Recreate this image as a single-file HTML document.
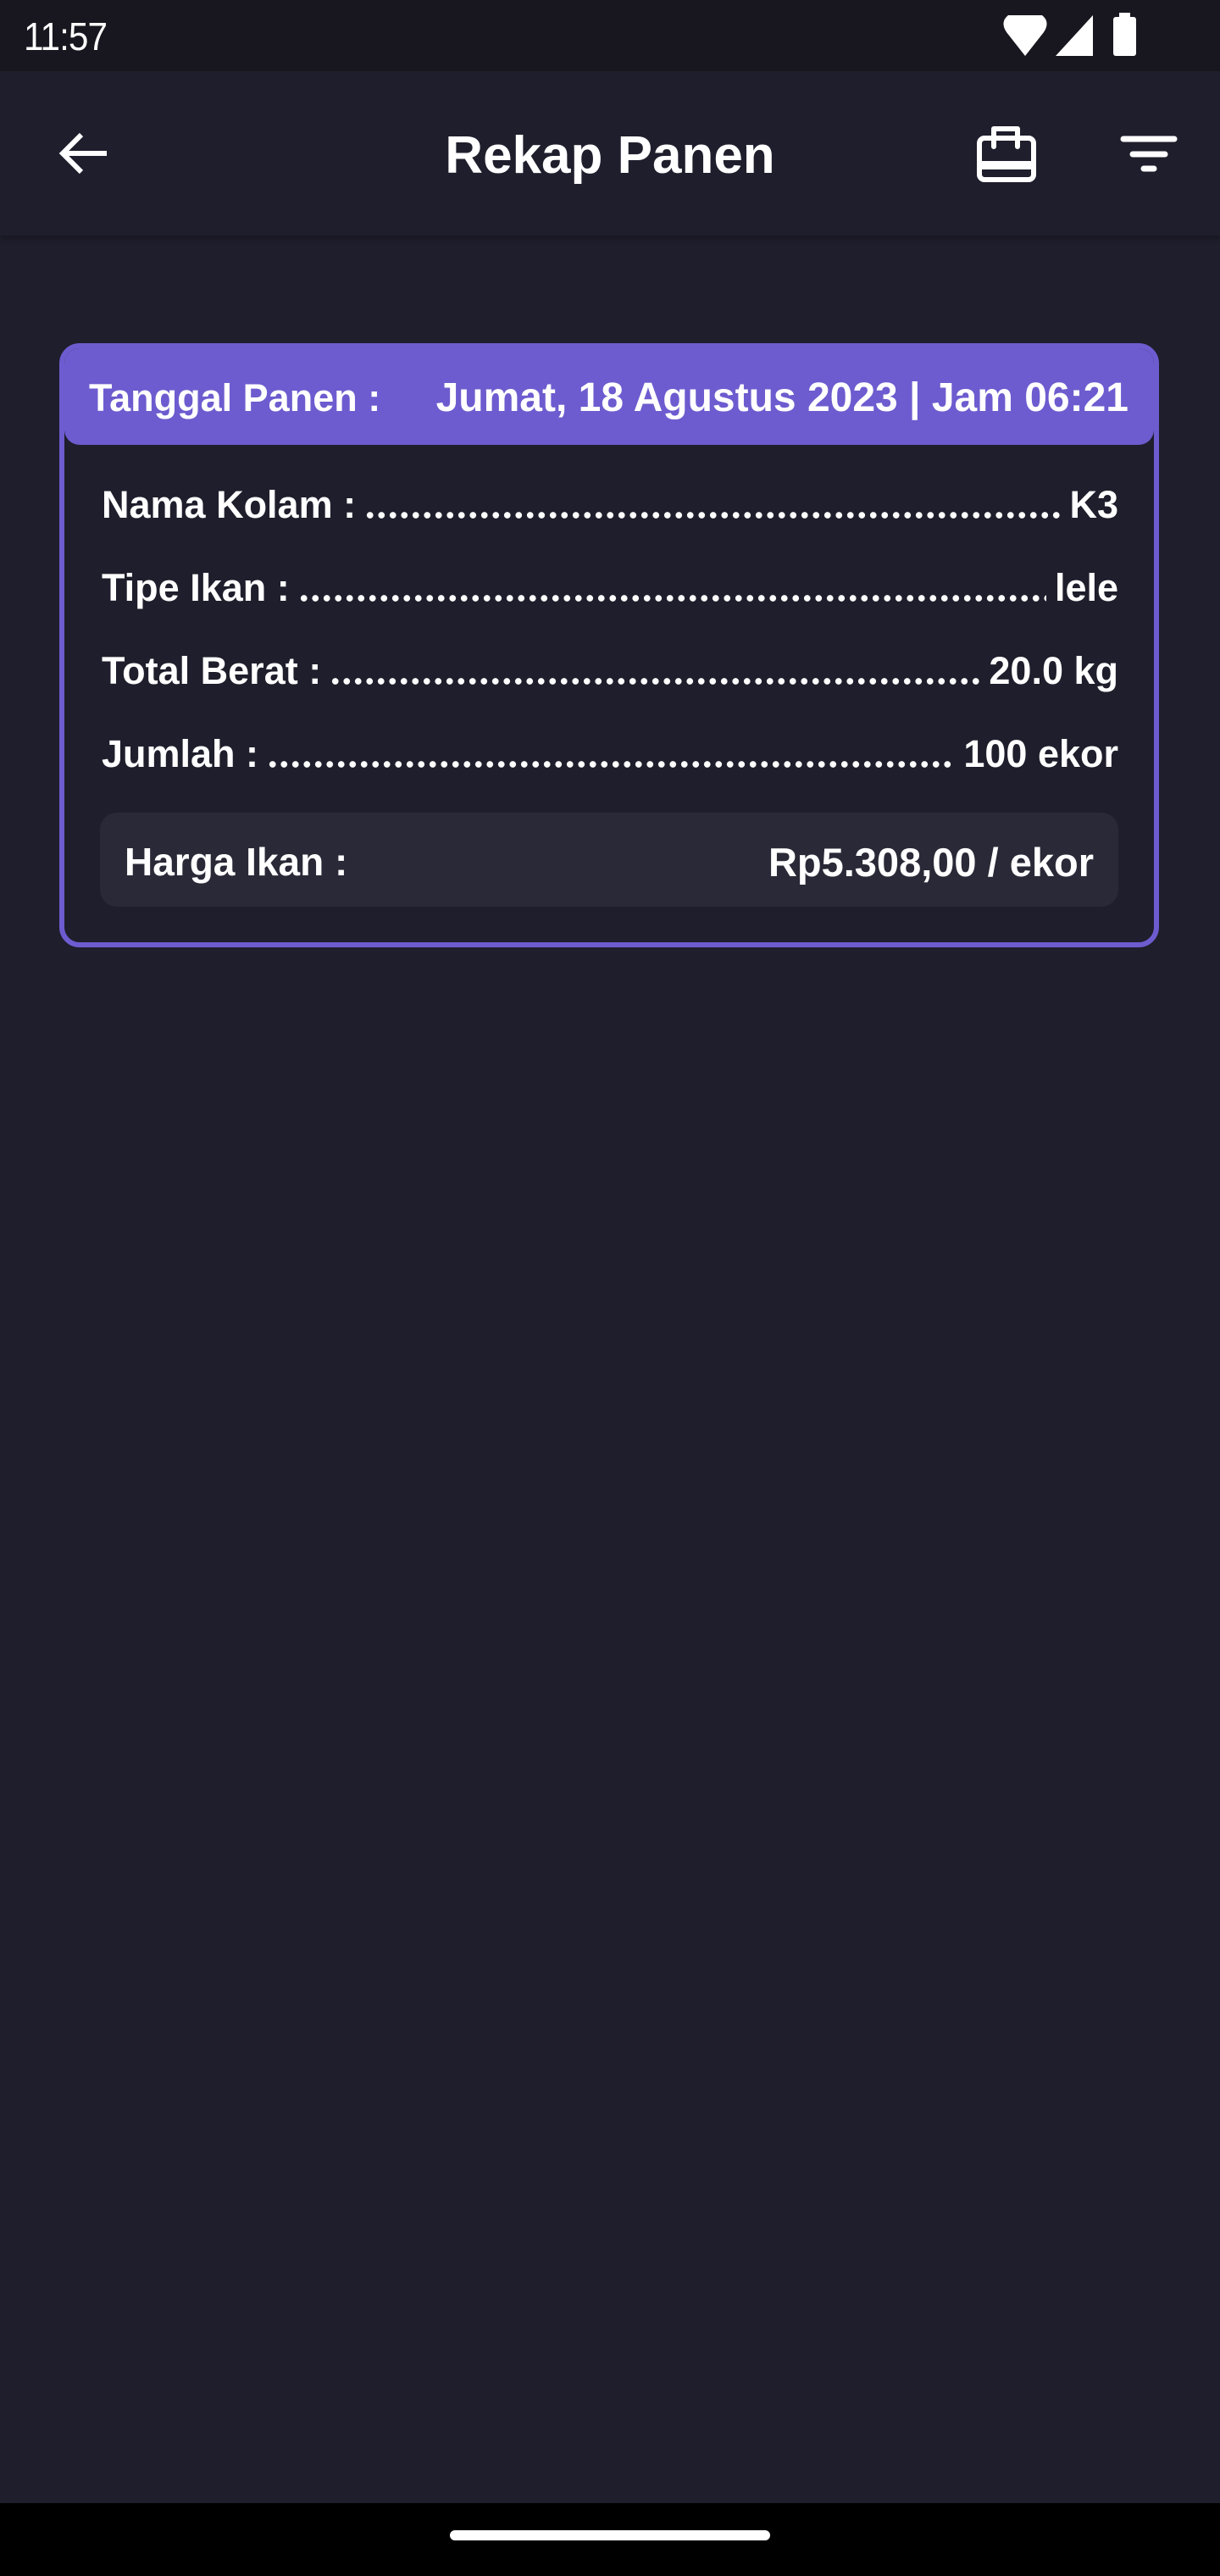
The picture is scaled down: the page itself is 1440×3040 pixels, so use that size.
<!DOCTYPE html>
<html><head><meta charset="utf-8">
<style>
*{margin:0;padding:0;box-sizing:border-box}
body{width:1440px;height:3040px;background:#1f1e2c;font-family:"Liberation Sans",sans-serif;color:#fff;position:relative;overflow:hidden}
.status{position:absolute;left:0;top:0;width:1440px;height:84px;background:#18171f}
.time{position:absolute;left:28px;top:16px;font-size:46px;letter-spacing:-1px;transform:scaleX(0.92);transform-origin:left}
.appbar{position:absolute;left:0;top:84px;width:1440px;height:194px;background:#1f1e2c;box-shadow:0 4px 6px rgba(0,0,0,.25)}
.title{position:absolute;left:0;width:1440px;top:64px;text-align:center;font-size:62px;line-height:72px;font-weight:bold}
.card{position:absolute;left:70px;top:405px;width:1298px;height:713px;border:6px solid #6d5ccf;border-radius:24px;overflow:hidden}
.head{position:absolute;left:0;top:0;width:100%;height:114px;background:#6d5ccf;border-radius:0 0 18px 18px;font-weight:bold}
.head .a{position:absolute;left:29px;top:33px;font-size:45px}
.head .b{position:absolute;right:30px;top:31px;font-size:48px}
.row{position:absolute;left:44px;width:1200px;display:flex;align-items:flex-end;font-weight:bold;font-size:45px;height:54px}
.row .d{flex:1;height:10px;margin:0 10px 9px;background:radial-gradient(circle,#fff 3.5px,transparent 4.1px) 0 0/13.5px 10px repeat-x}
.harga{position:absolute;left:42px;top:548px;width:1202px;height:111px;background:#2a2937;border-radius:20px;font-weight:bold;font-size:46px}
.harga .a{position:absolute;left:29px;top:31px}
.harga .b{position:absolute;right:29px;top:31px;font-size:47px}
.nav{position:absolute;left:0;top:2954px;width:1440px;height:86px;background:#000}
.handle{position:absolute;left:531px;top:32px;width:378px;height:12px;border-radius:6px;background:#fff}
</style></head><body>
<div class="status"><div class="time">11:57</div>
<svg style="position:absolute;left:1180px;top:12px" width="180" height="56" viewBox="0 0 180 56">
<path d="M10 6 L50 6 Q60 14 52 26 L30 54 L8 26 Q0 14 10 6Z" fill="#fff"/>
<path d="M66 54 L110 6 L110 54Z" fill="#fff"/>
<rect x="134" y="8" width="27" height="46" rx="3" fill="#fff"/><rect x="141" y="3" width="13" height="7" fill="#fff"/>
</svg></div>
<div class="appbar">
<svg style="position:absolute;left:66px;top:67px" width="64" height="60" viewBox="0 0 64 60"><path d="M60 30 H8 M30 8 L8 30 L30 52" stroke="#fff" stroke-width="6" fill="none"/></svg>
<div class="title">Rekap Panen</div>
<svg style="position:absolute;left:1150px;top:62px" width="80" height="72" viewBox="0 0 80 72">
<rect x="6" y="17" width="64" height="49" rx="6" fill="none" stroke="#fff" stroke-width="6"/>
<path d="M23 27 V6 H51 V27" fill="none" stroke="#fff" stroke-width="6" stroke-linejoin="round" stroke-linecap="round"/>
<rect x="6" y="44" width="64" height="10" fill="#fff"/>
</svg>
<svg style="position:absolute;left:1320px;top:70px" width="72" height="56" viewBox="0 0 72 56">
<path d="M6 10 H66 M17 28 H55 M30 45 H42" stroke="#fff" stroke-width="7" stroke-linecap="round"/>
</svg>
</div>
<div class="card">
<div class="head"><span class="a">Tanggal Panen :</span><span class="b">Jumat, 18 Agustus 2023 | Jam 06:21</span></div>
<div class="row" style="top:157px"><span>Nama Kolam :</span><span class="d"></span><span>K3</span></div>
<div class="row" style="top:255px"><span>Tipe Ikan :</span><span class="d"></span><span>lele</span></div>
<div class="row" style="top:353px"><span>Total Berat :</span><span class="d"></span><span>20.0 kg</span></div>
<div class="row" style="top:451px"><span>Jumlah :</span><span class="d"></span><span>100 ekor</span></div>
<div class="harga"><span class="a">Harga Ikan :</span><span class="b">Rp5.308,00 / ekor</span></div>
</div>
<div class="nav"><div class="handle"></div></div>
</body></html>
